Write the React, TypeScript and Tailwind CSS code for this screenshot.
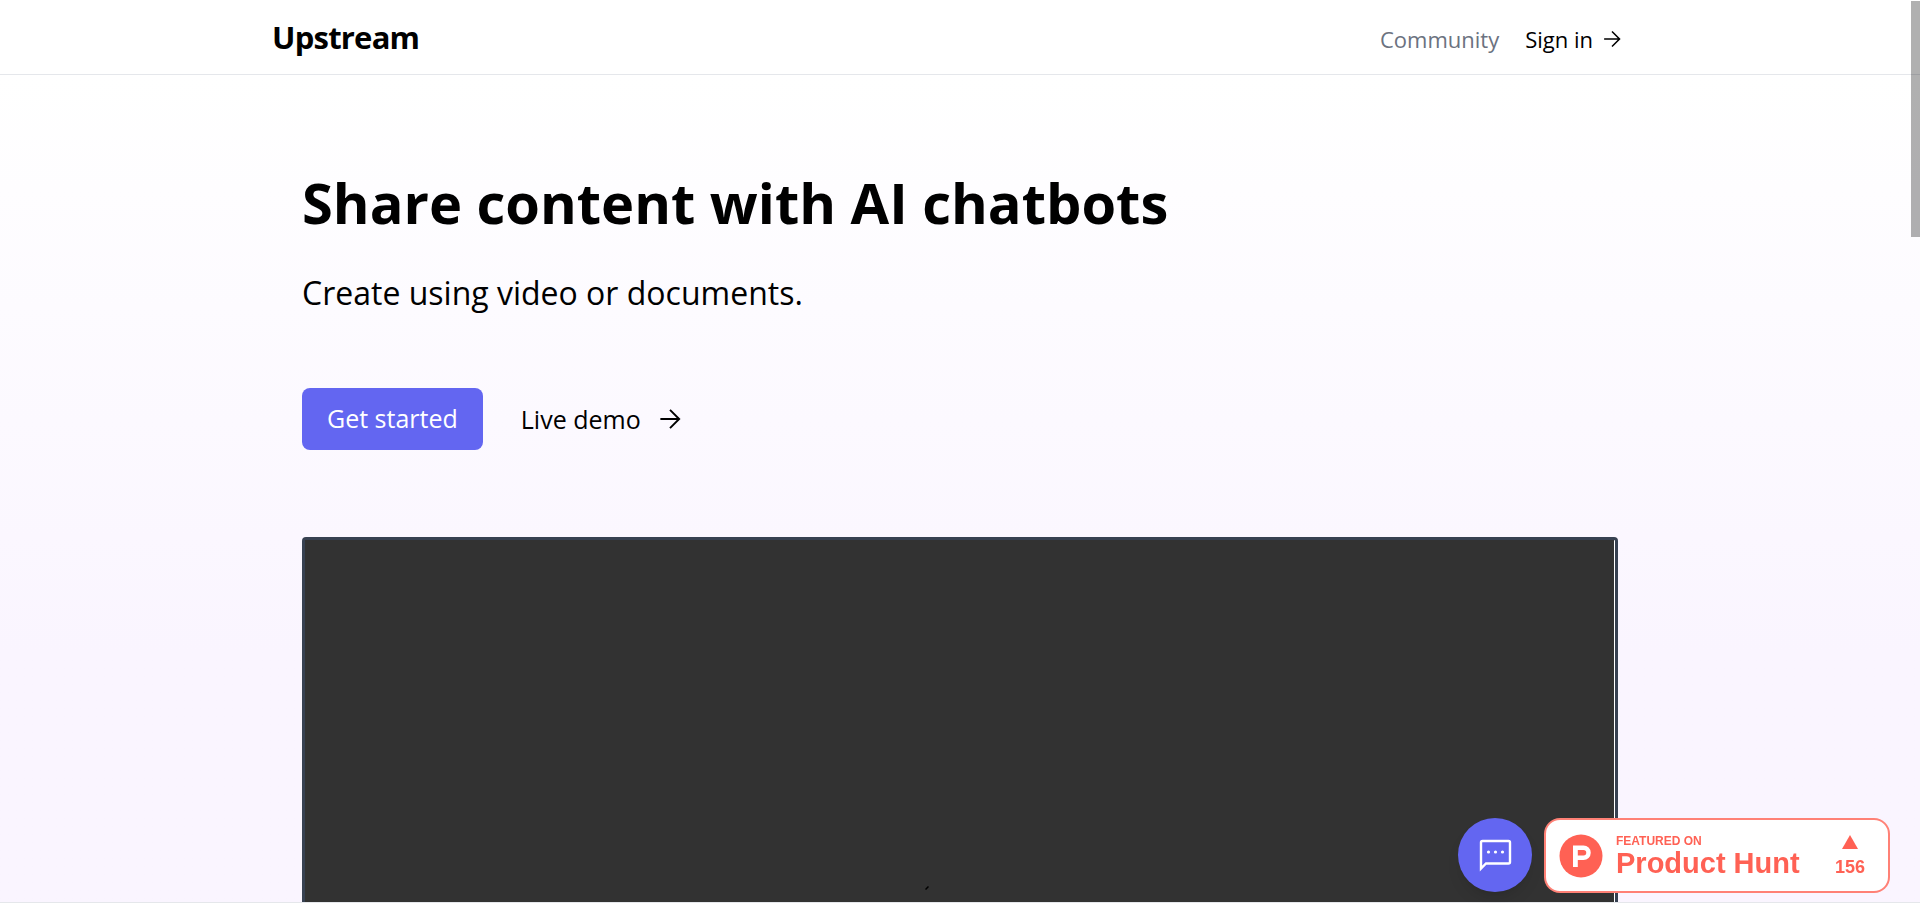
import React from "react";

function Arrow({ className }: { className: string }) {
  return (
    <svg className={className} viewBox="0 0 24 24" fill="none" stroke="currentColor" strokeWidth="2.100" strokeLinecap="butt" strokeLinejoin="miter" aria-hidden="true">
      <path d="M1.500 12H21.500M12 2L22 12L12 22" />
    </svg>
  );
}

function Header() {
  return (
    <header className="shrink-0 border-b border-[#e5e7eb] bg-white">
      <div className="mx-auto flex h-[74px] max-w-[1376px] items-center justify-between pr-[27px]">
        <a href="#" className="pb-px text-[31px] leading-9 font-bold tracking-tight text-black">Upstream</a>
        <nav className="flex items-center gap-[26px] pt-1 text-[22px] leading-8">
          <a href="#community" className="text-[#6b7280]">Community</a>
          <a href="#signin" className="flex items-center gap-[10px] text-black">
            Sign in
            <Arrow className="size-[18px]" />
          </a>
        </nav>
      </div>
    </header>
  );
}

function ChatButton() {
  return (
    <button type="button" aria-label="Open chat" className="flex size-[74px] items-center justify-center rounded-full bg-[#6366f1] text-white shadow-lg">
      <svg className="size-9" viewBox="0 0 36 36" fill="none" stroke="currentColor" strokeWidth="2.400" aria-hidden="true">
        <path d="M4 31.500V5.500Q4 4 5.500 4H31.500Q33 4 33 5.500V25Q33 26.500 31.500 26.500H9Z" />
        <g fill="currentColor" stroke="none">
          <circle cx="11.500" cy="15" r="1.600" />
          <circle cx="18.500" cy="15" r="1.600" />
          <circle cx="25.500" cy="15" r="1.600" />
        </g>
      </svg>
    </button>
  );
}

function ProductHuntBadge() {
  return (
    <a href="#producthunt" className="flex h-[75px] w-[346px] items-center justify-between rounded-2xl border-2 border-[#ff6154]/80 bg-white pr-[23px] pl-[13px] font-['Liberation_Sans',Arial,sans-serif] font-bold text-[#ff6154]">
      <span className="flex items-center gap-[13px]">
        <svg className="size-11" viewBox="0 0 44 44" aria-hidden="true">
          <circle cx="22" cy="22" r="21.500" fill="#ff6154" />
          <path fillRule="evenodd" fill="#fff" d="M14 11.500H24.500A7.200 7.200 0 0 1 24.500 26H18.800V33H14ZM18.800 16V21.500H24.500A2.750 2.750 0 0 0 24.500 16Z" />
        </svg>
        <span className="flex flex-col pb-px">
          <span className="text-[12px] leading-4">FEATURED ON</span>
          <span className="text-[29px] leading-7">Product Hunt</span>
        </span>
      </span>
      <span className="flex flex-col items-center gap-1 pt-1">
        <svg className="h-[14px] w-4" viewBox="0 0 16 14" fill="currentColor" aria-hidden="true">
          <path d="M8 0L16 14H0Z" />
        </svg>
        <span className="text-lg">156</span>
      </span>
    </a>
  );
}

export default function App() {
  return (
    <div className="flex h-screen flex-col overflow-hidden bg-white font-['Open_Sans','Noto_Sans',sans-serif] text-black">
      <Header />
      <main className="flex min-h-0 flex-1 flex-col bg-linear-to-b from-white to-[#faf5ff] to-70%">
        <div className="mx-auto flex min-h-0 w-full max-w-[1316px] flex-1 flex-col">
          <h1 className="mt-[97px] text-[56px] leading-[60px] font-bold">Share content with AI chatbots</h1>
          <p className="mt-[41px] text-[32px] leading-10">Create using video or documents.</p>
          <div className="mt-[75px] flex items-center gap-[38px] text-[25px] leading-8">
            <button type="button" className="h-[62px] rounded-lg bg-[#6366f1] px-[25px] pb-[2px] font-medium text-white">Get started</button>
            <a href="#demo" className="flex items-center gap-[18px] pb-px">
              Live demo
              <Arrow className="size-[22px]" />
            </a>
          </div>
          <div className="mt-[87px] flex min-h-0 flex-1 rounded-t-sm border-x-3 border-t-3 border-[#374151] bg-white pr-px">
            <div className="flex flex-1 items-end justify-center bg-[#323232] pr-[66px] pb-3">
              <svg className="size-1" viewBox="0 0 4 4" stroke="#000" strokeWidth="1.500" aria-hidden="true">
                <path d="M0.500 3.500L3.500 0.500" />
              </svg>
            </div>
          </div>
        </div>
      </main>
      <div className="h-px shrink-0 bg-[#e5e7eb]" />
      <div className="fixed right-[30px] bottom-[10px] flex items-start gap-3">
        <ChatButton />
        <ProductHuntBadge />
      </div>
      <div className="fixed top-px right-0 h-[236px] w-[9px] bg-black/31" />
    </div>
  );
}
